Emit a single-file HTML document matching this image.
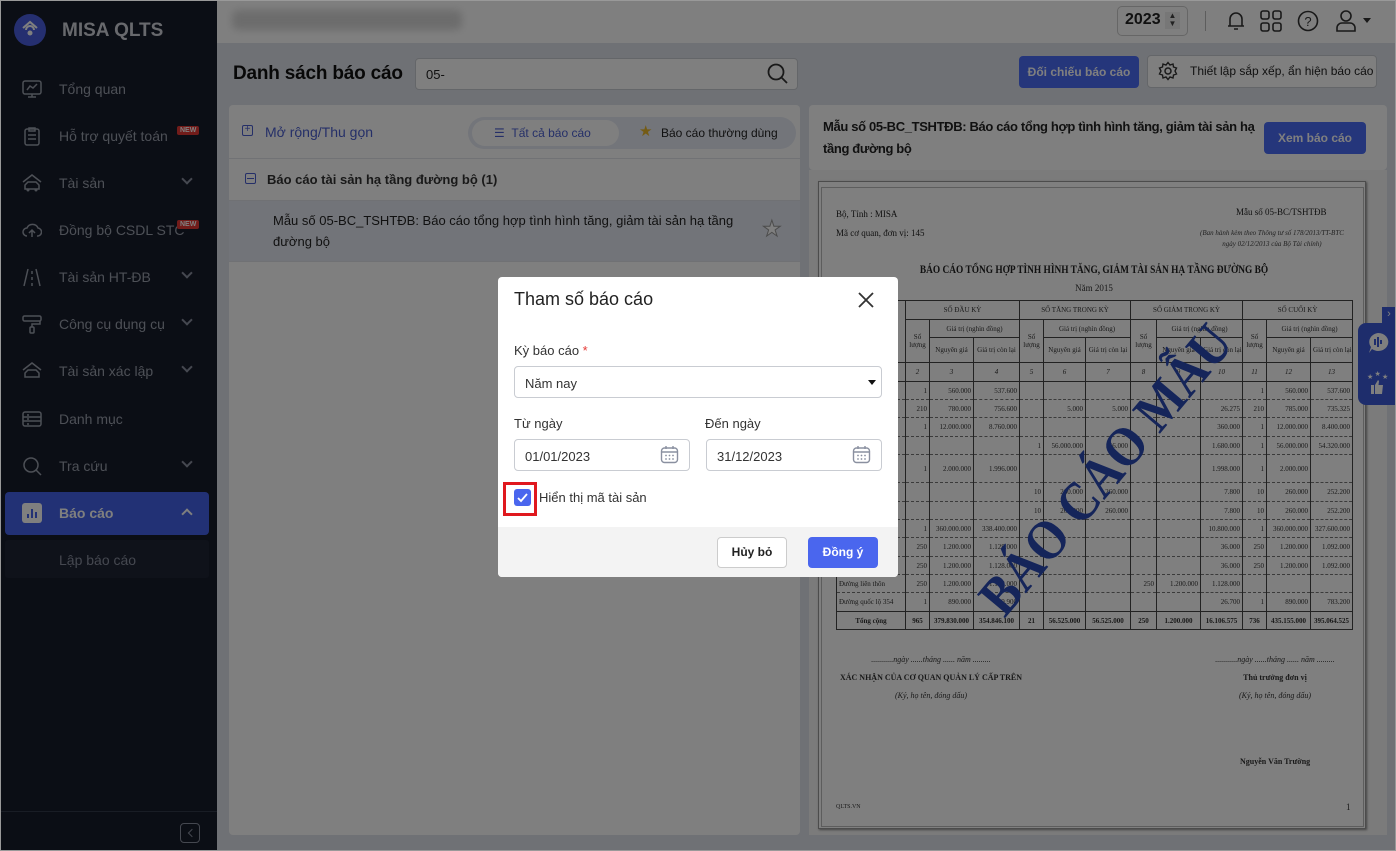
<!DOCTYPE html>
<html><head><meta charset="utf-8">
<style>
*{box-sizing:border-box;margin:0;padding:0}
body{width:1396px;height:851px;overflow:hidden;position:relative;font-family:"Liberation Sans",Arial,sans-serif;background:#dfe3ea;color:#222}
.abs{position:absolute}
#side{left:0;top:0;width:217px;height:851px;background:#171c2b}
.mi{position:absolute;left:0;width:217px;height:40px;color:#9aa0ad;font-size:14px}
.mi .ic{position:absolute;left:22px;top:10px;width:20px;height:20px}
.mi .t{position:absolute;left:59px;top:12px}
.mi .ch{position:absolute;left:183px;top:12px;width:8px;height:8px;border-right:2px solid #8a90a0;border-bottom:2px solid #8a90a0;transform:rotate(45deg)}
.new{position:absolute;background:#e53935;color:#fff;font-size:7px;font-weight:bold;padding:1px 3px;border-radius:2px}
#hdr{left:217px;top:0;width:1179px;height:43px;background:#fff}
.card{background:#fff;border-radius:4px}
table.r{border-collapse:collapse;font-family:"Liberation Serif",serif;font-size:7px;color:#333;table-layout:fixed}
table.r td{border-left:1px solid #444;border-right:1px solid #444;border-bottom:1px dashed #777;text-align:right;padding:0 2px;overflow:hidden;white-space:nowrap}
table.r tr.h td{border:1px solid #444;text-align:center}
#ov{left:0;top:0;width:1396px;height:851px;background:rgba(0,0,0,.5)}
#dlg{left:498px;top:277px;width:400px;height:300px;background:#fff;border-radius:4px;overflow:hidden}
.inp{position:absolute;border:1px solid #c9ccd2;border-radius:4px;height:32px;font-size:13px;color:#333;padding:9px 10px}
.lbl{position:absolute;font-size:13px;color:#333}
</style></head><body>

<div id="side" class="abs">
  <div class="abs" style="left:14px;top:14px;width:32px;height:32px;border-radius:50%;background:#4a5fe0"></div>
  <svg class="abs" style="left:20px;top:19px" width="20" height="20" viewBox="0 0 20 20"><path d="M3 9 L10 3 L17 9" fill="none" stroke="#fff" stroke-width="2"/><path d="M6 11 a4 4 0 0 1 8 0" fill="none" stroke="#fff" stroke-width="2"/><circle cx="10" cy="14" r="2.5" fill="#fff"/></svg>
  <div class="abs" style="left:62px;top:20px;color:#d0d3da;font-size:19px;font-weight:bold">MISA QLTS</div>

  <div class="mi" style="top:69px"><svg class="ic" viewBox="0 0 20 20"><rect x="1" y="2" width="18" height="13" rx="2" fill="none" stroke="#9aa0ad" stroke-width="1.5"/><path d="M5 11 L8 7 L11 9 L15 5 M10 15 V18 M6 18 H14" fill="none" stroke="#9aa0ad" stroke-width="1.5"/></svg><span class="t">Tổng quan</span></div>
  <div class="mi" style="top:116px"><svg class="ic" viewBox="0 0 20 20"><rect x="3" y="3" width="14" height="16" rx="2" fill="none" stroke="#9aa0ad" stroke-width="1.5"/><path d="M7 2 H13 V5 H7 Z M6 9 H14 M6 13 H14" fill="none" stroke="#9aa0ad" stroke-width="1.5"/></svg><span class="t">Hỗ trợ quyết toán</span><span class="new" style="left:177px;top:10px">NEW</span></div>
  <div class="mi" style="top:163px"><svg class="ic" viewBox="0 0 20 20"><path d="M1 9 L10 2 L19 9 M3 16 H17 V12 L14 9 H6 L3 12 Z" fill="none" stroke="#9aa0ad" stroke-width="1.5"/><circle cx="6" cy="17" r="1.5" fill="#9aa0ad"/><circle cx="14" cy="17" r="1.5" fill="#9aa0ad"/></svg><span class="t">Tài sản</span><span class="ch"></span></div>
  <div class="mi" style="top:210px"><svg class="ic" viewBox="0 0 20 20"><path d="M5 16 A4 4 0 0 1 5 8 A6 6 0 0 1 16 8 A4 4 0 0 1 15 16 M10 17 V10 M7 13 L10 10 L13 13" fill="none" stroke="#9aa0ad" stroke-width="1.5"/></svg><span class="t">Đồng bộ CSDL STC</span><span class="new" style="left:177px;top:10px">NEW</span></div>
  <div class="mi" style="top:257px"><svg class="ic" viewBox="0 0 20 20"><path d="M6 2 L2 19 M14 2 L18 19 M10 4 V7 M10 10 V13 M10 16 V19" fill="none" stroke="#9aa0ad" stroke-width="1.5"/></svg><span class="t">Tài sản HT-ĐB</span><span class="ch"></span></div>
  <div class="mi" style="top:304px"><svg class="ic" viewBox="0 0 20 20"><rect x="1" y="2" width="18" height="5" rx="1.5" fill="none" stroke="#9aa0ad" stroke-width="1.5"/><path d="M18 7 V10 H10 V13" fill="none" stroke="#9aa0ad" stroke-width="1.5"/><rect x="8" y="13" width="4" height="6" rx="1" fill="none" stroke="#9aa0ad" stroke-width="1.5"/></svg><span class="t">Công cụ dụng cụ</span><span class="ch"></span></div>
  <div class="mi" style="top:351px"><svg class="ic" viewBox="0 0 20 20"><path d="M1 9 L10 2 L19 9 M3 16 H17 V12 L14 9 H6 L3 12 Z" fill="none" stroke="#9aa0ad" stroke-width="1.5"/></svg><span class="t">Tài sản xác lập</span><span class="ch"></span></div>
  <div class="mi" style="top:399px"><svg class="ic" viewBox="0 0 20 20"><rect x="1" y="3" width="18" height="14" rx="2" fill="none" stroke="#9aa0ad" stroke-width="1.5"/><path d="M1 8 H19 M1 12 H19 M5 6 H7 M5 10 H7 M5 15 H7" stroke="#9aa0ad" stroke-width="1.5"/></svg><span class="t">Danh mục</span></div>
  <div class="mi" style="top:446px"><svg class="ic" viewBox="0 0 20 20"><circle cx="9" cy="9" r="7" fill="none" stroke="#9aa0ad" stroke-width="1.5"/><path d="M14 14 L19 19" stroke="#9aa0ad" stroke-width="1.5"/></svg><span class="t">Tra cứu</span><span class="ch"></span></div>
  <div class="abs" style="left:5px;top:492px;width:204px;height:43px;background:#4562ea;border-radius:4px"></div>
  <div class="mi" style="top:493px;color:#fff;font-weight:bold"><svg class="ic" viewBox="0 0 20 20"><rect x="0" y="0" width="20" height="20" rx="3" fill="#fff"/><path d="M6 15 V11 M10 15 V6 M14 15 V9" stroke="#4562ea" stroke-width="2"/></svg><span class="t">Báo cáo</span><span class="ch" style="transform:rotate(225deg);top:17px;border-color:#fff"></span></div>
  <div class="abs" style="left:5px;top:540px;width:204px;height:38px;background:#1f2435;border-radius:3px"></div>
  <div class="abs" style="left:59px;top:552px;color:#8a90a0;font-size:14px">Lập báo cáo</div>
  <div class="abs" style="left:0;top:811px;width:217px;height:1px;background:#333a4a"></div>
  <div class="abs" style="left:180px;top:823px;width:20px;height:20px;border:1.5px solid #8a90a0;border-radius:4px"></div>
  <div class="abs" style="left:189px;top:830px;width:6px;height:6px;border-left:1.5px solid #8a90a0;border-bottom:1.5px solid #8a90a0;transform:rotate(45deg)"></div>
</div>

<div id="hdr" class="abs">
  <div class="abs" style="left:15px;top:10px;width:230px;height:20px;background:#d9d9d9;filter:blur(4px);border-radius:6px"></div>
  <div class="abs" style="left:900px;top:6px;width:71px;height:30px;border:1px solid #ccc;border-radius:5px"></div>
  <div class="abs" style="left:908px;top:11px;font-size:16px;font-weight:bold;color:#222">2023</div>
  <div class="abs" style="left:948px;top:12px;width:15px;height:17px;background:#eee;font-size:8px;text-align:center;line-height:8px;color:#444">▲<br>▼</div>
  <div class="abs" style="left:988px;top:11px;width:1px;height:20px;background:#bbb"></div>
  <svg class="abs" style="left:1007px;top:9px" width="24" height="24" viewBox="0 0 24 24"><path d="M6 17 V10 a6 6 0 0 1 12 0 V17 H4 H20 M10 20 h4" fill="none" stroke="#333" stroke-width="1.6"/></svg>
  <svg class="abs" style="left:1043px;top:10px" width="22" height="22" viewBox="0 0 22 22"><g fill="none" stroke="#333" stroke-width="1.6"><rect x="1" y="1" width="8" height="8" rx="2"/><rect x="13" y="1" width="8" height="8" rx="2"/><rect x="1" y="13" width="8" height="8" rx="2"/><rect x="13" y="13" width="8" height="8" rx="2"/></g></svg>
  <svg class="abs" style="left:1080px;top:10px" width="22" height="22" viewBox="0 0 22 22"><circle cx="11" cy="11" r="9.5" fill="none" stroke="#333" stroke-width="1.6"/><text x="11" y="16" font-size="13" text-anchor="middle" fill="#333" font-family="Liberation Sans">?</text></svg>
  <svg class="abs" style="left:1118px;top:9px" width="22" height="24" viewBox="0 0 22 24"><circle cx="11" cy="7" r="5" fill="none" stroke="#333" stroke-width="1.6"/><path d="M2 22 V19 a5 5 0 0 1 5-5 h8 a5 5 0 0 1 5 5 V22 Z" fill="none" stroke="#333" stroke-width="1.6"/></svg>
  <div class="abs" style="left:1146px;top:18px;border:4px solid transparent;border-top:5px solid #333"></div>
</div>

<div class="abs" style="left:233px;top:63px;font-size:19px;font-weight:bold;color:#111;letter-spacing:-0.2px">Danh sách báo cáo</div>
<div class="abs" style="left:415px;top:58px;width:383px;height:32px;background:#fff;border:1px solid #c9ccd2;border-radius:4px;font-size:13px;padding:8px 10px">05-</div>
<svg class="abs" style="left:767px;top:63px" width="22" height="22" viewBox="0 0 22 22"><circle cx="9" cy="9" r="7.5" fill="none" stroke="#333" stroke-width="1.8"/><path d="M14.5 14.5 L20 20" stroke="#333" stroke-width="1.8"/></svg>
<div class="abs" style="left:1019px;top:56px;width:120px;height:32px;background:#4a6cf7;border-radius:4px;color:#fff;font-size:12px;font-weight:bold;text-align:center;line-height:32px">Đối chiếu báo cáo</div>
<div class="abs" style="left:1147px;top:55px;width:230px;height:33px;background:#fff;border:1px solid #c9ccd2;border-radius:4px;font-size:12px;line-height:31px;padding-left:42px;color:#222">Thiết lập sắp xếp, ẩn hiện báo cáo</div>
<svg class="abs" style="left:1158px;top:61px" width="20" height="20" viewBox="0 0 20 20"><circle cx="10" cy="10" r="3" fill="none" stroke="#333" stroke-width="1.5"/><path d="M10 1.5 L12 4 L15 3 L15.5 6 L18.5 7 L17 10 L18.5 13 L15.5 14 L15 17 L12 16 L10 18.5 L8 16 L5 17 L4.5 14 L1.5 13 L3 10 L1.5 7 L4.5 6 L5 3 L8 4 Z" fill="none" stroke="#333" stroke-width="1.4"/></svg>

<div class="abs card" style="left:229px;top:105px;width:571px;height:730px"></div>
<div class="abs" style="left:242px;top:125px;width:11px;height:11px;border:1px solid #4a5fd0;border-radius:2px;font-size:10px;line-height:8px;text-align:center;color:#4a5fd0">+</div>
<div class="abs" style="left:265px;top:124px;font-size:14px;color:#4a5fd0">Mở rộng/Thu gọn</div>
<div class="abs" style="left:468px;top:117px;width:328px;height:32px;background:#e6eaf4;border-radius:16px"></div>
<div class="abs" style="left:472px;top:120px;width:147px;height:26px;background:#fff;border-radius:13px"></div>
<div class="abs" style="left:494px;top:126px;font-size:12px;color:#4a5fd0">☰&nbsp;&nbsp;Tất cả báo cáo</div>
<div class="abs" style="left:639px;top:122px;font-size:15px;color:#e8b72a">★</div>
<div class="abs" style="left:661px;top:126px;font-size:12px;color:#222">Báo cáo thường dùng</div>
<div class="abs" style="left:229px;top:158px;width:571px;height:1px;background:#e3e5ea"></div>
<div class="abs" style="left:245px;top:173px;width:11px;height:11px;border:1px solid #4a5fd0;border-radius:2px"></div>
<div class="abs" style="left:247px;top:178px;width:7px;height:1px;background:#4a5fd0"></div>
<div class="abs" style="left:267px;top:172px;font-size:13px;font-weight:bold;color:#333">Báo cáo tài sản hạ tầng đường bộ (1)</div>
<div class="abs" style="left:229px;top:200px;width:571px;height:62px;background:#e5e9f3;border-top:1px solid #e0e2e8;border-bottom:1px solid #e0e2e8"></div>
<div class="abs" style="left:273px;top:210px;width:470px;font-size:13px;line-height:21px;color:#222">Mẫu số 05-BC_TSHTĐB: Báo cáo tổng hợp tình hình tăng, giảm tài sản hạ tầng đường bộ</div>
<div class="abs" style="left:762px;top:216px;font-size:22px;color:#fff;-webkit-text-stroke:1px #999">★</div>

<div class="abs card" style="left:809px;top:105px;width:578px;height:65px"></div>
<div class="abs" style="left:823px;top:116px;width:432px;font-size:13px;font-weight:bold;line-height:22px;color:#222;letter-spacing:-0.35px">Mẫu số 05-BC_TSHTĐB: Báo cáo tổng hợp tình hình tăng, giảm tài sản hạ tầng đường bộ</div>
<div class="abs" style="left:1264px;top:122px;width:102px;height:32px;background:#4a6cf7;border-radius:4px;color:#fff;font-size:12px;font-weight:bold;text-align:center;line-height:32px">Xem báo cáo</div>
<div class="abs" style="left:809px;top:170px;width:578px;height:665px;background:#f6f6f6"></div>
<div class="abs" style="left:818px;top:181px;width:548px;height:648px;background:#fff;border:1px solid #999;box-shadow:1px 1px 2px #888"></div>
<div class="abs" style="left:821px;top:187px;width:543px;height:640px;border:1px solid #bbb"></div>
<div class="abs" style="left:836px;top:205px;font-family:'Liberation Serif',serif;font-size:9px;line-height:19px;color:#222">Bộ, Tỉnh : MISA<br>Mã cơ quan, đơn vị: 145</div>
<div class="abs" style="left:1236px;top:207px;font-family:'Liberation Serif',serif;font-size:9px;color:#222">Mẫu số 05-BC/TSHTĐB</div>
<div class="abs" style="left:1200px;top:228px;font-family:'Liberation Serif',serif;font-size:7px;font-style:italic;text-align:center;color:#444;line-height:11px">(Ban hành kèm theo Thông tư số 178/2013/TT-BTC<br>ngày 02/12/2013 của Bộ Tài chính)</div>
<div class="abs" style="left:836px;top:262px;width:516px;text-align:center;font-family:'Liberation Serif',serif;font-size:12px;font-weight:bold;color:#222;transform:scaleX(0.78)">BÁO CÁO TỔNG HỢP TÌNH HÌNH TĂNG, GIẢM TÀI SẢN HẠ TẦNG ĐƯỜNG BỘ</div>
<div class="abs" style="left:836px;top:283px;width:516px;text-align:center;font-family:'Liberation Serif',serif;font-size:9px;color:#333">Năm 2015</div>

<table class="r abs" style="left:836px;top:300px;width:516px;border:1.5px solid #333">
<colgroup><col style="width:69px"><col style="width:24px"><col style="width:44px"><col style="width:46px"><col style="width:24px"><col style="width:42px"><col style="width:45px"><col style="width:26px"><col style="width:44px"><col style="width:42px"><col style="width:24px"><col style="width:44px"><col style="width:42px"></colgroup>
<tr class="h" style="height:19px"><td rowspan="3"></td><td colspan="3">SỐ ĐẦU KỲ</td><td colspan="3">SỐ TĂNG TRONG KỲ</td><td colspan="3">SỐ GIẢM TRONG KỲ</td><td colspan="3">SỐ CUỐI KỲ</td></tr>
<tr class="h" style="height:18px"><td rowspan="2" style="white-space:normal">Số lượng</td><td colspan="2">Giá trị (nghìn đồng)</td><td rowspan="2" style="white-space:normal">Số lượng</td><td colspan="2">Giá trị (nghìn đồng)</td><td rowspan="2" style="white-space:normal">Số lượng</td><td colspan="2">Giá trị (nghìn đồng)</td><td rowspan="2" style="white-space:normal">Số lượng</td><td colspan="2">Giá trị (nghìn đồng)</td></tr>
<tr class="h" style="height:25px"><td>Nguyên giá</td><td>Giá trị còn lại</td><td>Nguyên giá</td><td>Giá trị còn lại</td><td>Nguyên giá</td><td>Giá trị còn lại</td><td>Nguyên giá</td><td>Giá trị còn lại</td></tr>
<tr class="h" style="height:19px;font-style:italic"><td>1</td><td>2</td><td>3</td><td>4</td><td>5</td><td>6</td><td>7</td><td>8</td><td>9</td><td>10</td><td>11</td><td>12</td><td>13</td></tr>
<tr style="height:18px"><td></td><td>1</td><td>560.000</td><td>537.600</td><td></td><td></td><td></td><td></td><td></td><td></td><td>1</td><td>560.000</td><td>537.600</td></tr>
<tr style="height:18px"><td></td><td>210</td><td>780.000</td><td>756.600</td><td></td><td>5.000</td><td>5.000</td><td></td><td></td><td>26.275</td><td>210</td><td>785.000</td><td>735.325</td></tr>
<tr style="height:19px"><td></td><td>1</td><td>12.000.000</td><td>8.760.000</td><td></td><td></td><td></td><td></td><td></td><td>360.000</td><td>1</td><td>12.000.000</td><td>8.400.000</td></tr>
<tr style="height:18px"><td></td><td></td><td></td><td></td><td>1</td><td>56.000.000</td><td>56.000</td><td></td><td></td><td>1.680.000</td><td>1</td><td>56.000.000</td><td>54.320.000</td></tr>
<tr style="height:28px"><td></td><td>1</td><td>2.000.000</td><td>1.996.000</td><td></td><td></td><td></td><td></td><td></td><td>1.998.000</td><td>1</td><td>2.000.000</td><td></td></tr>
<tr style="height:19px"><td></td><td></td><td></td><td></td><td>10</td><td>260.000</td><td>260.000</td><td></td><td></td><td>7.800</td><td>10</td><td>260.000</td><td>252.200</td></tr>
<tr style="height:18px"><td></td><td></td><td></td><td></td><td>10</td><td>260.000</td><td>260.000</td><td></td><td></td><td>7.800</td><td>10</td><td>260.000</td><td>252.200</td></tr>
<tr style="height:18px"><td></td><td>1</td><td>360.000.000</td><td>338.400.000</td><td></td><td></td><td></td><td></td><td></td><td>10.800.000</td><td>1</td><td>360.000.000</td><td>327.600.000</td></tr>
<tr style="height:19px"><td></td><td>250</td><td>1.200.000</td><td>1.128.000</td><td></td><td></td><td></td><td></td><td></td><td>36.000</td><td>250</td><td>1.200.000</td><td>1.092.000</td></tr>
<tr style="height:18px"><td></td><td>250</td><td>1.200.000</td><td>1.128.000</td><td></td><td></td><td></td><td></td><td></td><td>36.000</td><td>250</td><td>1.200.000</td><td>1.092.000</td></tr>
<tr style="height:18px"><td style="text-align:left">Đường liên thôn</td><td>250</td><td>1.200.000</td><td>1.128.000</td><td></td><td></td><td></td><td>250</td><td>1.200.000</td><td>1.128.000</td><td></td><td></td><td></td></tr>
<tr style="height:19px"><td style="text-align:left">Đường quốc lộ 354</td><td>1</td><td>890.000</td><td>809.900</td><td></td><td></td><td></td><td></td><td></td><td>26.700</td><td>1</td><td>890.000</td><td>783.200</td></tr>
<tr class="h" style="height:18px;font-weight:bold"><td>Tổng cộng</td><td>965</td><td>379.830.000</td><td>354.846.100</td><td>21</td><td>56.525.000</td><td>56.525.000</td><td>250</td><td>1.200.000</td><td>16.106.575</td><td>736</td><td>435.155.000</td><td>395.064.525</td></tr>
</table>
<div class="abs" style="transform:translate(-50%,-50%) rotate(-50deg) scaleX(0.88);font-family:'Liberation Serif',serif;font-weight:bold;font-size:56px;color:#2b4bb5;white-space:nowrap;left:1106px;top:470px">BÁO CÁO MẪU</div>

<div class="abs" style="left:836px;top:651px;width:190px;text-align:center;font-family:'Liberation Serif',serif;font-size:8px;color:#333;line-height:18px"><i>...........ngày ......tháng ...... năm .........</i><br><b>XÁC NHẬN CỦA CƠ QUAN QUẢN LÝ CẤP TRÊN</b><br><i>(Ký, họ tên, đóng dấu)</i></div>
<div class="abs" style="left:1200px;top:651px;width:150px;text-align:center;font-family:'Liberation Serif',serif;font-size:8px;color:#333;line-height:18px"><i>...........ngày ......tháng ...... năm .........</i><br><b>Thủ trưởng đơn vị</b><br><i>(Ký, họ tên, đóng dấu)</i></div>
<div class="abs" style="left:1240px;top:757px;font-family:'Liberation Serif',serif;font-size:8px;font-weight:bold;color:#333">Nguyễn Văn Trường</div>
<div class="abs" style="left:836px;top:804px;font-family:'Liberation Serif',serif;font-size:6px;color:#333">QLTS.VN</div>
<div class="abs" style="left:1346px;top:802px;font-family:'Liberation Serif',serif;font-size:9px;color:#333">1</div>

<div class="abs" style="left:1382px;top:307px;width:14px;height:16px;background:#3d5bd9;color:#fff;font-size:11px;line-height:15px;text-align:center">›</div>
<div class="abs" style="left:1358px;top:323px;width:38px;height:82px;background:#3d5bd9;border-radius:8px 0 0 8px"></div>
<svg class="abs" style="left:1367px;top:332px" width="22" height="22" viewBox="0 0 22 22"><path d="M11 1 a10 9 0 1 1 -6 16 L2 21 L4 15 A10 9 0 0 1 11 1Z" fill="#fff"/><path d="M8 7 V13 M11 5 V15 M14 8 V12" stroke="#3d5bd9" stroke-width="2"/></svg>
<svg class="abs" style="left:1366px;top:371px" width="24" height="24" viewBox="0 0 24 24"><text x="1" y="8" font-size="7" fill="#fff">★</text><text x="8.5" y="5" font-size="7" fill="#fff">★</text><text x="16" y="8" font-size="7" fill="#fff">★</text><path d="M5 14 H8 V23 H5 Z M9 14 L12 9 L13 10 L12.5 14 H17 L16 23 H9 Z" fill="#fff"/></svg>

<div id="ov" class="abs"></div>

<div id="dlg" class="abs">
  <div class="abs" style="left:16px;top:12px;font-size:18px;color:#222">Tham số báo cáo</div>
  <svg class="abs" style="left:359px;top:14px" width="18" height="18" viewBox="0 0 18 18"><path d="M2 2 L16 16 M16 2 L2 16" stroke="#333" stroke-width="1.8"/></svg>
  <div class="lbl" style="left:16px;top:66px">Kỳ báo cáo <span style="color:#e53935">*</span></div>
  <div class="inp" style="left:16px;top:89px;width:368px">Năm nay</div>
  <div class="abs" style="left:370px;top:103px;border:4px solid transparent;border-top:5px solid #111"></div>
  <div class="lbl" style="left:16px;top:139px">Từ ngày</div>
  <div class="lbl" style="left:207px;top:139px">Đến ngày</div>
  <div class="inp" style="left:16px;top:162px;width:176px">01/01/2023</div>
  <div class="inp" style="left:208px;top:162px;width:176px">31/12/2023</div>
  <svg class="abs" style="left:162px;top:168px" width="19" height="19" viewBox="0 0 19 19"><rect x="1.5" y="3" width="16" height="14.5" rx="3" fill="none" stroke="#8a90a0" stroke-width="1.4"/><path d="M1.5 7 H17.5 M6 1 V4 M13 1 V4" stroke="#8a90a0" stroke-width="1.4"/><g fill="#8a90a0"><circle cx="6" cy="10.5" r=".9"/><circle cx="9.5" cy="10.5" r=".9"/><circle cx="13" cy="10.5" r=".9"/><circle cx="6" cy="14" r=".9"/><circle cx="9.5" cy="14" r=".9"/><circle cx="13" cy="14" r=".9"/></g></svg>
  <svg class="abs" style="left:354px;top:168px" width="19" height="19" viewBox="0 0 19 19"><rect x="1.5" y="3" width="16" height="14.5" rx="3" fill="none" stroke="#8a90a0" stroke-width="1.4"/><path d="M1.5 7 H17.5 M6 1 V4 M13 1 V4" stroke="#8a90a0" stroke-width="1.4"/><g fill="#8a90a0"><circle cx="6" cy="10.5" r=".9"/><circle cx="9.5" cy="10.5" r=".9"/><circle cx="13" cy="10.5" r=".9"/><circle cx="6" cy="14" r=".9"/><circle cx="9.5" cy="14" r=".9"/><circle cx="13" cy="14" r=".9"/></g></svg>
  <div class="abs" style="left:5px;top:205px;width:34px;height:34px;border:3px solid #e0181e"></div>
  <div class="abs" style="left:16px;top:212px;width:17px;height:17px;background:#4a66ee;border-radius:3px"></div>
  <svg class="abs" style="left:18px;top:214px" width="13" height="13" viewBox="0 0 13 13"><path d="M2 7 L5 10 L11 3" fill="none" stroke="#fff" stroke-width="1.8"/></svg>
  <div class="lbl" style="left:41px;top:213px">Hiển thị mã tài sản</div>
  <div class="abs" style="left:0;top:250px;width:400px;height:50px;background:#f3f3f3"></div>
  <div class="abs" style="left:219px;top:260px;width:70px;height:31px;background:#fff;border:1px solid #ccc;border-radius:4px;font-size:12px;font-weight:bold;text-align:center;line-height:29px;color:#222">Hủy bỏ</div>
  <div class="abs" style="left:310px;top:260px;width:70px;height:31px;background:#4a66ee;border-radius:4px;font-size:12px;font-weight:bold;text-align:center;line-height:31px;color:#fff">Đồng ý</div>
</div>
<div class="abs" style="left:0;top:0;width:1396px;height:851px;border:1px solid #999;pointer-events:none"></div>
</body></html>
